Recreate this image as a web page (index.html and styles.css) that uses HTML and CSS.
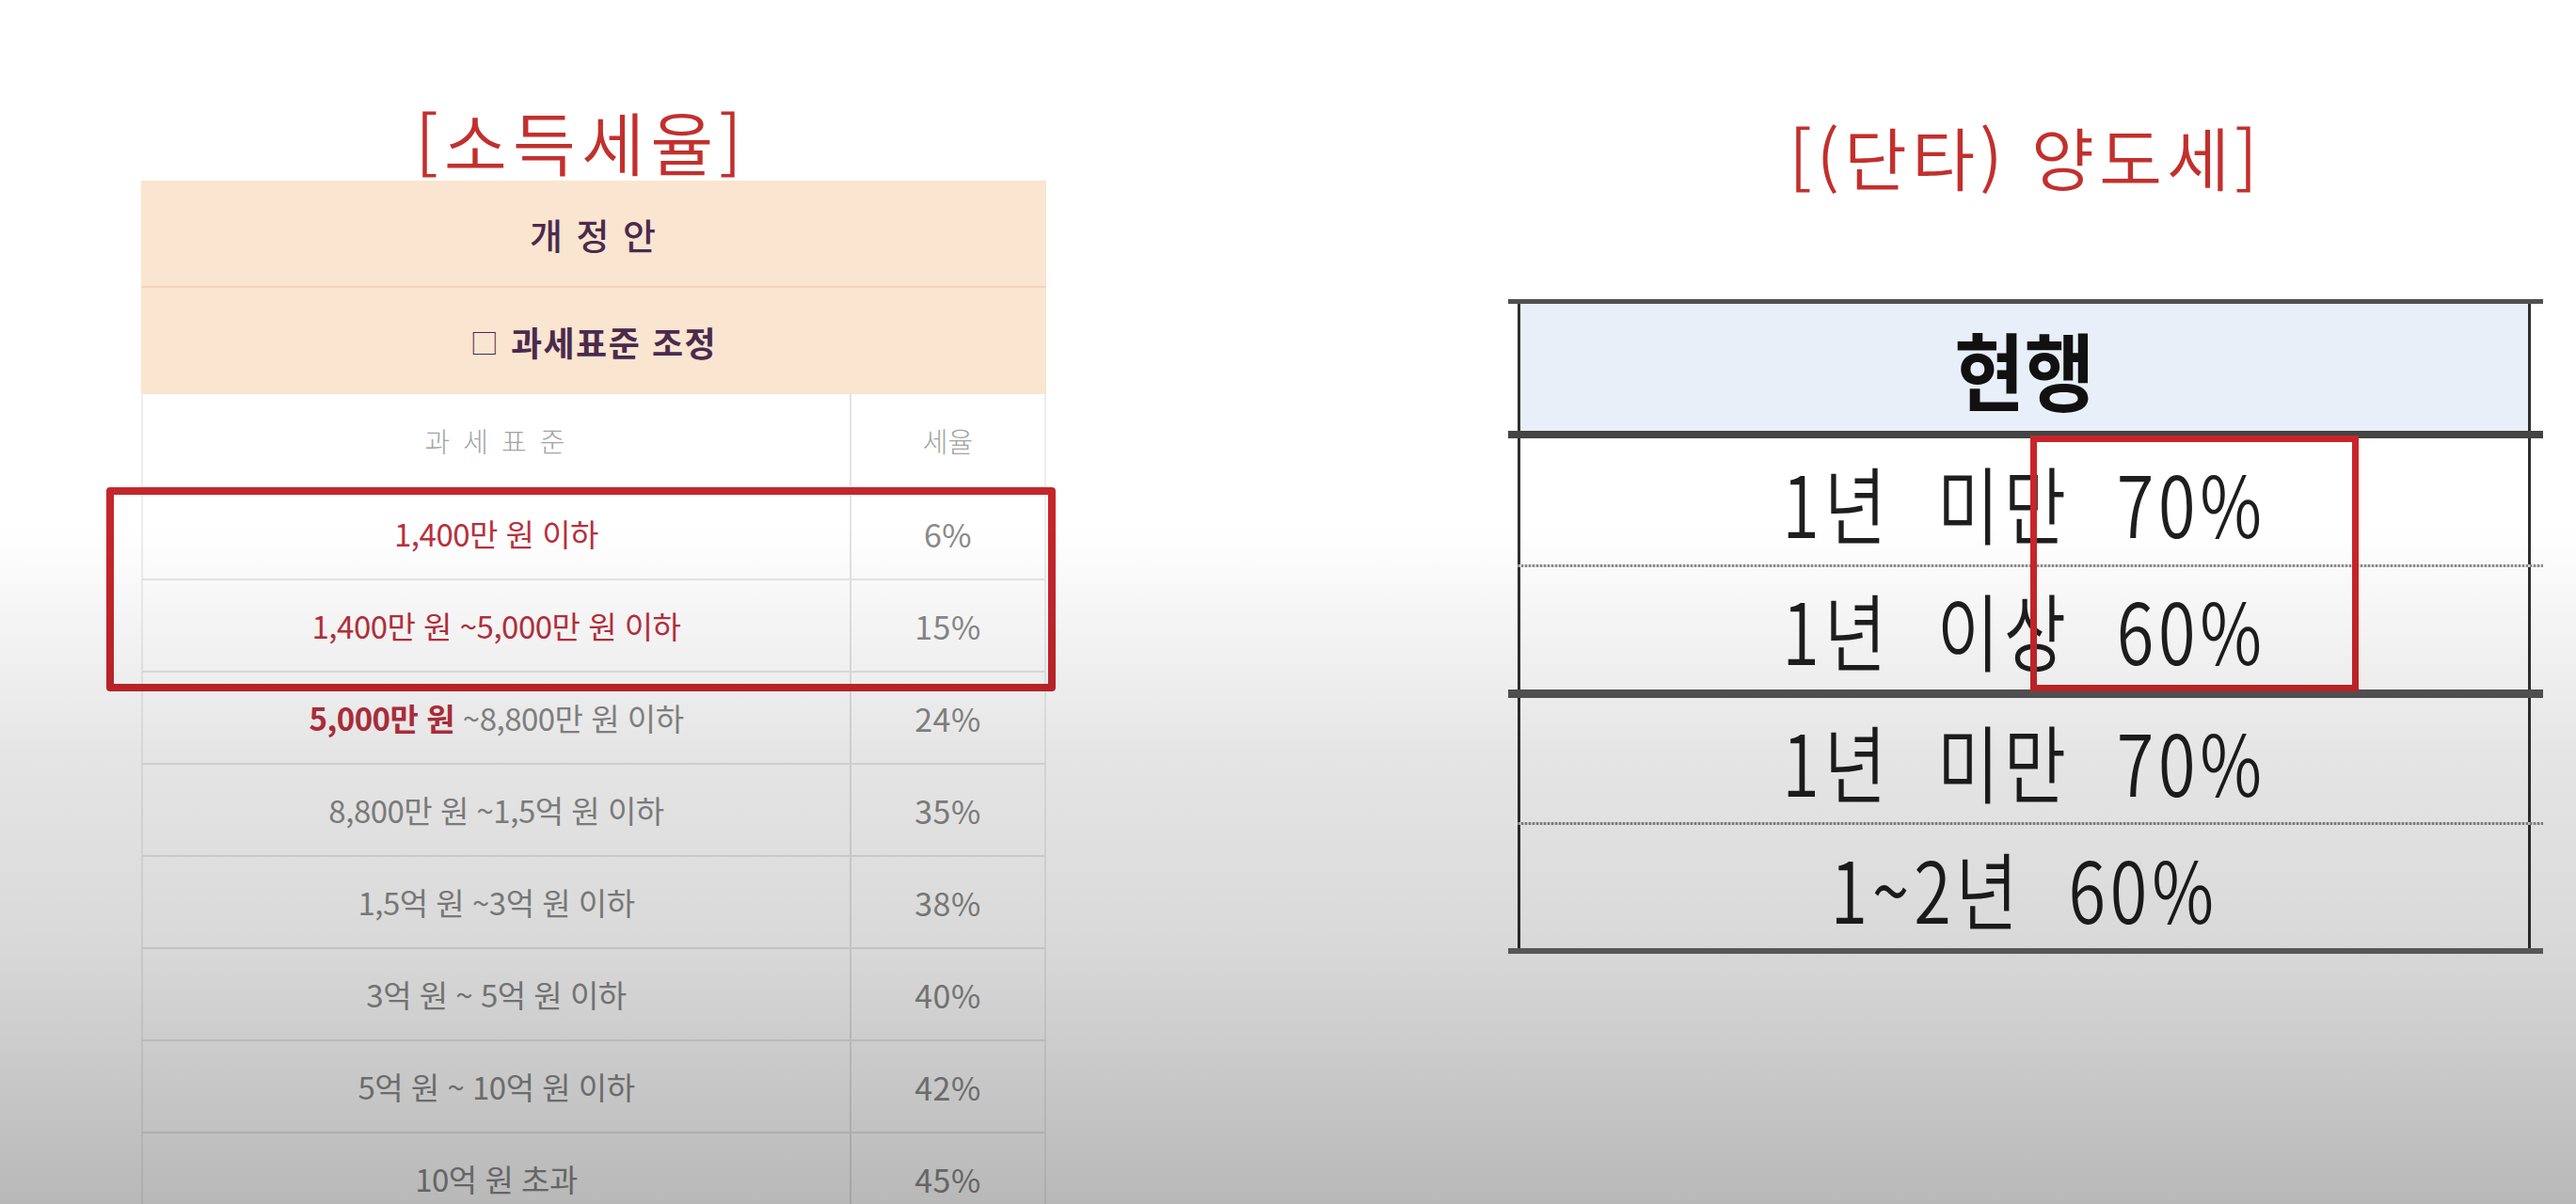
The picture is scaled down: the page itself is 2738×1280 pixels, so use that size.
FILE: index.html
```html
<!DOCTYPE html>
<html lang="ko">
<head>
<meta charset="utf-8">
<title>소득세율 / 양도세</title>
<link rel="stylesheet" href="styles.css">
</head>
<body>
<div class="page">
  <section class="panel panel-left">
    <h1 class="title title-left">[소득세율]</h1>
    <div class="ltable">
      <div class="lhead lhead-1">개 정 안</div>
      <div class="lhead lhead-2"><span class="box-glyph">□</span>&nbsp;과세표준 조정</div>
      <div class="lrow lrow-colhead"><div class="c1">과 세 표 준</div><div class="c2">세율</div></div>
      <div class="lrow"><div class="c1 red">1,400만 원 이하</div><div class="c2">6%</div></div>
      <div class="lrow"><div class="c1 red">1,400만 원 ~5,000만 원 이하</div><div class="c2">15%</div></div>
      <div class="lrow"><div class="c1"><span class="red strong">5,000만 원</span>&nbsp;~8,800만 원 이하</div><div class="c2">24%</div></div>
      <div class="lrow"><div class="c1">8,800만 원 ~1,5억 원 이하</div><div class="c2">35%</div></div>
      <div class="lrow"><div class="c1">1,5억 원 ~3억 원 이하</div><div class="c2">38%</div></div>
      <div class="lrow"><div class="c1">3억 원 ~ 5억 원 이하</div><div class="c2">40%</div></div>
      <div class="lrow"><div class="c1">5억 원 ~ 10억 원 이하</div><div class="c2">42%</div></div>
      <div class="lrow"><div class="c1">10억 원 초과</div><div class="c2">45%</div></div>
      <div class="hl-box hl-left"></div>
    </div>
  </section>

  <section class="panel panel-right">
    <h1 class="title title-right">[(단타) 양도세]</h1>
    <div class="rtable">
      <div class="rrule rrule-top"></div>
      <div class="rrow rhead"><span class="rt-head">현행</span></div>
      <div class="rrule rrule-thick"></div>
      <div class="rrow rrow-1"><span class="rt">1년 미만 70%</span></div>
      <div class="rdot"></div>
      <div class="rrow rrow-2"><span class="rt">1년 이상 60%</span></div>
      <div class="rrule rrule-mid"></div>
      <div class="rrow rrow-3"><span class="rt">1년 미만 70%</span></div>
      <div class="rdot"></div>
      <div class="rrow rrow-4"><span class="rt">1~2년 60%</span></div>
      <div class="rrule rrule-bottom"></div>
      <div class="hl-box hl-right"></div>
    </div>
  </section>

  <div class="shade"></div>
</div>
</body>
</html>
```

FILE: styles.css
```css
* { box-sizing: border-box; }
html, body { margin: 0; padding: 0; }
body {
  font-family: "Noto Sans CJK KR", "Noto Sans", sans-serif;
  background: #fff;
}
.page {
  position: relative;
  width: 2738px;
  height: 1280px;
  overflow: hidden;
  display: flex;
  align-items: flex-start;
}
.panel-left { margin-left: 150px; width: 962px; padding-top: 114px; }
.panel-right { margin-left: 491px; width: 1100px; padding-top: 130px; }

.title {
  margin: 0;
  font-weight: 350;
  font-size: 73px;
  line-height: 70px;
  height: 70px;
  color: #c2302d;
  text-align: center;
  white-space: nowrap;
}
.title-left { margin-bottom: 8px; padding-right: 26px; letter-spacing: 6px; }
.title-right { margin-bottom: 118px; letter-spacing: 5px; }

/* left table */
.ltable { position: relative; }
.lhead {
  display: flex;
  align-items: center;
  justify-content: center;
  background: #fae5d0;
  color: #4b2a4e;
}
.lhead-1 {
  height: 114px;
  border-bottom: 2px solid #f1d6bd;
  font-size: 38px;
  font-weight: 500;
  letter-spacing: 2px;
}
.lhead-2 {
  height: 113px;
  font-size: 36px;
  font-weight: 700;
  letter-spacing: 1.5px;
}
.box-glyph { font-size: 30px; font-weight: 300; }
.lrow {
  display: grid;
  grid-template-columns: 753px 1fr;
  height: 98px;
  border-bottom: 2px solid #e6e6e6;
  border-left: 2px solid #ededed;
  border-right: 2px solid #ededed;
  background: #fff;
  font-size: 33px;
  color: #8a8a8a;
  letter-spacing: -0.5px;
}
.lrow > div {
  display: flex;
  align-items: center;
  justify-content: center;
  white-space: pre;
}
.lrow .c1 { border-right: 2px solid #e3e3e3; }
.lrow .c2 { font-size: 34px; letter-spacing: 0.5px; }
.lrow-colhead {
  height: 100px;
  color: #a3a3a3;
  font-weight: 300;
}
.lrow-colhead .c1, .lrow-colhead .c2 { font-size: 29px; letter-spacing: 3px; }
.lrow-colhead .c2 { letter-spacing: 0; }
.red { color: #b8303d; }
.strong { font-weight: 700; }

/* right table */
.rtable { position: relative; }
.rrule { background: #505050; }
.rrule-top { height: 5px; }
.rrule-thick { height: 8px; background: #444; }
.rrule-mid { height: 9px; background: #555; }
.rrule-bottom { height: 6px; background: #666; }
.rdot {
  height: 3px;
  margin-left: 10px;
  background: repeating-linear-gradient(90deg, #8a8a8a 0 2px, #d8d8d8 2px 4px);
}
.rrow {
  margin: 0 13px 0 10px;
  border-left: 3px solid #2f2f2f;
  border-right: 3px solid #2f2f2f;
  display: flex;
  align-items: center;
  justify-content: center;
  background: #fff;
  color: #1e1e1e;
}
.rhead { height: 135px; background: #e9eff8; }
.rrow-1 { height: 134px; }
.rrow-2 { height: 130px; }
.rrow-3 { height: 132px; }
.rrow-4 { height: 131px; }
.rt {
  display: inline-block;
  font-size: 90px;
  font-weight: 350;
  line-height: 1;
  transform: scaleX(0.8);
  letter-spacing: 6px;
  word-spacing: 30px;
  white-space: nowrap;
}
.rt-head {
  display: inline-block;
  font-size: 90px;
  line-height: 1;
  font-weight: 700;
  color: #111;
  transform: scaleX(0.9);
}

/* highlight boxes */
.hl-box {
  position: absolute;
  border-style: solid;
  border-color: #c3262b;
  pointer-events: none;
}
.hl-left {
  top: 326px;
  left: -37px;
  width: 1009px;
  height: 217px;
  border-width: 8px;
  border-radius: 4px;
}
.hl-right {
  top: 145px;
  left: 555px;
  width: 349px;
  height: 272px;
  border-width: 7px;
  border-color: #c8252a;
}

/* video-like bottom shading */
.shade {
  position: absolute;
  inset: 0;
  pointer-events: none;
  background: linear-gradient(to bottom,
    rgba(0,0,0,0) 0px,
    rgba(0,0,0,0) 560px,
    rgba(0,0,0,0.06) 700px,
    rgba(0,0,0,0.10) 800px,
    rgba(0,0,0,0.15) 1000px,
    rgba(0,0,0,0.28) 1280px);
}
```
